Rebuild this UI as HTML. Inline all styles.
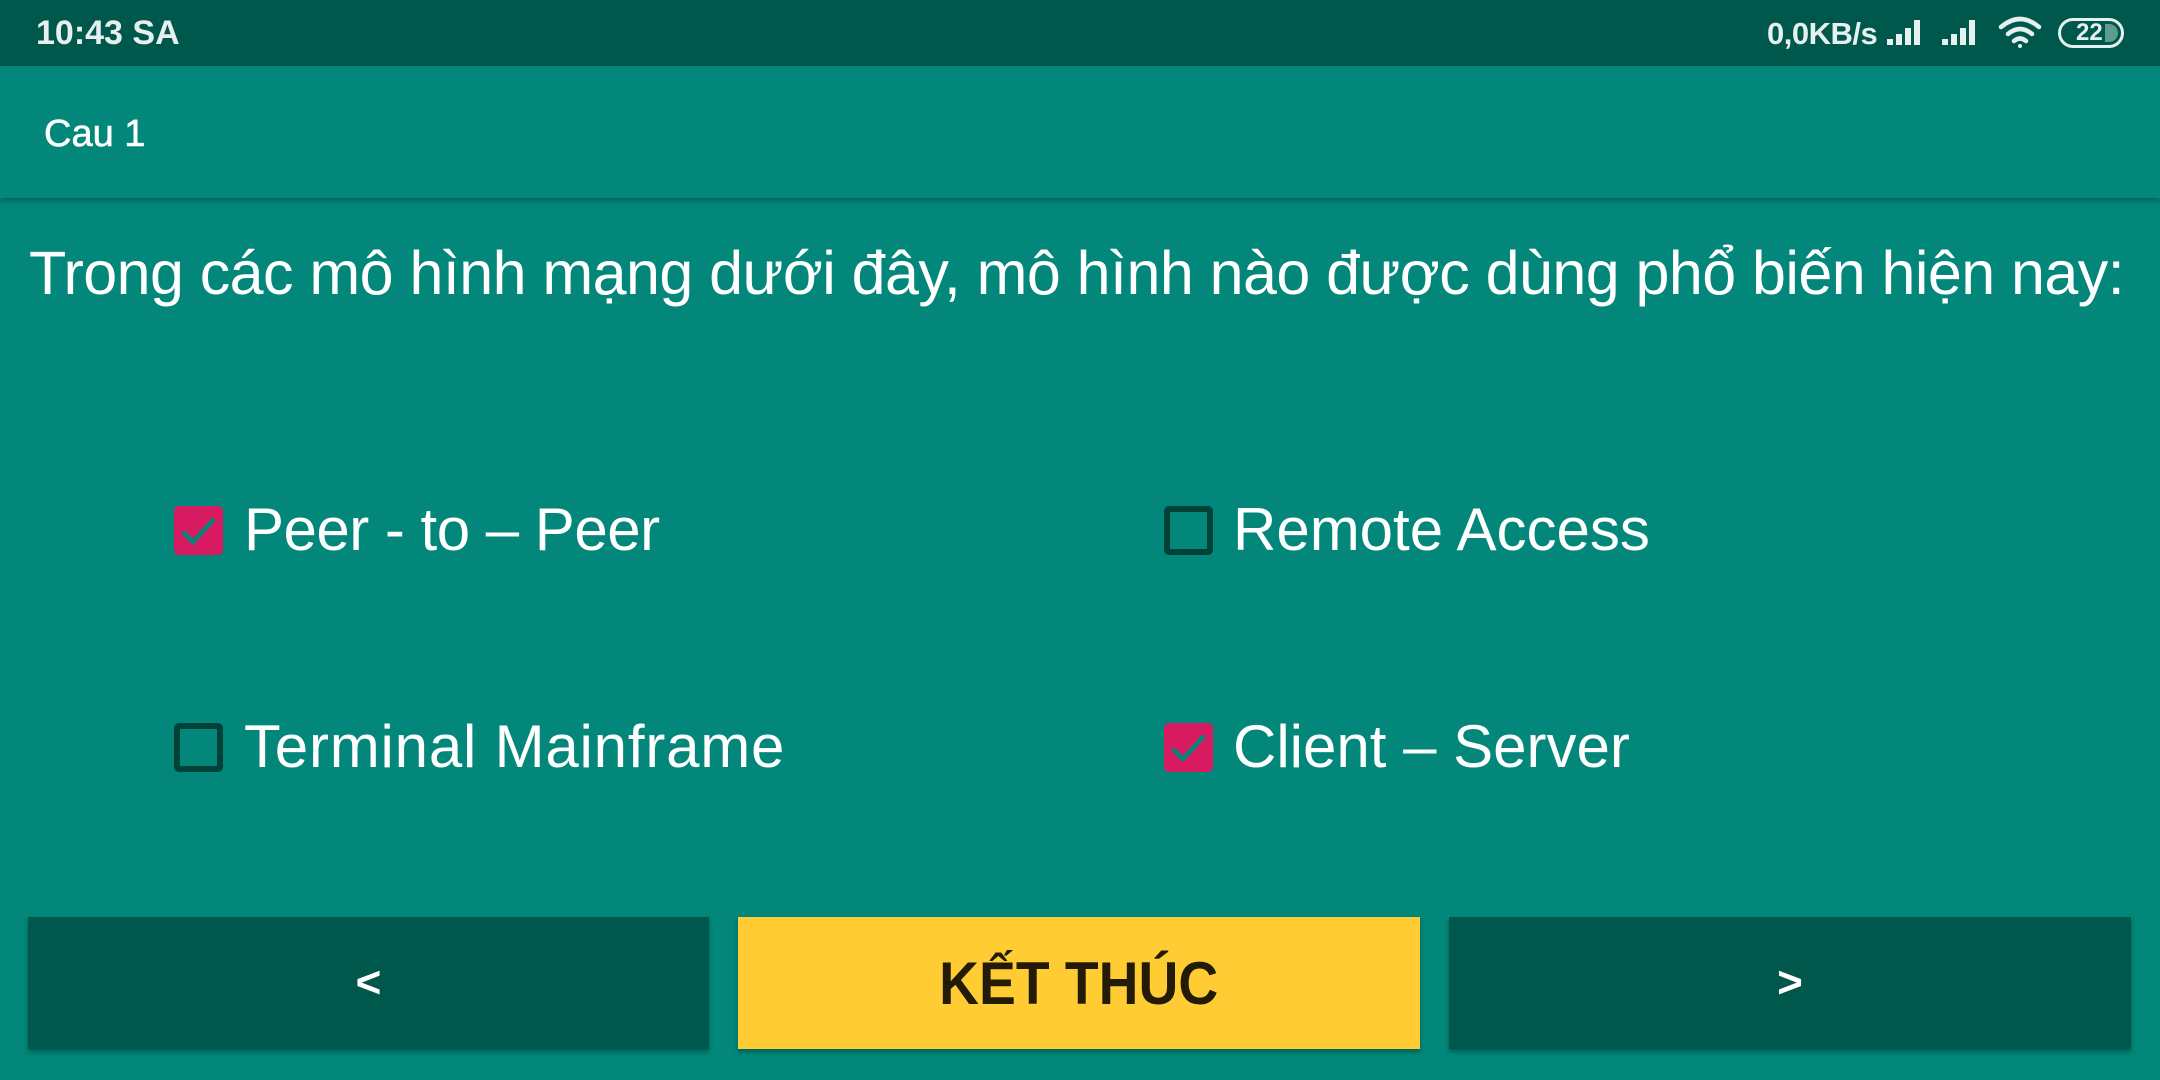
<!DOCTYPE html>
<html><head><meta charset="utf-8"><style>
*{margin:0;padding:0;box-sizing:border-box}
body{width:2160px;height:1080px;background:#02877A;font-family:"Liberation Sans",sans-serif;position:relative;overflow:hidden;color:#fff}
.sb{position:absolute;left:0;top:0;width:2160px;height:66px;background:#00584C}
.tb{position:absolute;left:0;top:66px;width:2160px;height:132px;background:#02877A;box-shadow:0 3px 5px rgba(0,0,0,.25)}
.abs{position:absolute;white-space:nowrap}
.cb{position:absolute;width:49px;height:49px;border-radius:5px}
.cb.on{background:#D81B60}
.cb.off{border:6px solid #004237}
.lbl{position:absolute;font-size:60px;line-height:60px}
.btn{position:absolute;top:917px;height:132px;box-shadow:0 3px 4px rgba(0,0,0,.3);display:flex;align-items:center;justify-content:center;font-weight:bold}
</style></head><body>
<div class="sb"></div>
<div class="abs" style="left:36px;top:14px;font-size:34px;font-weight:bold;color:#E6F0EE">10:43 SA</div>
<div class="abs" style="left:1767px;top:16px;font-size:31px;font-weight:bold;color:#E6F0EE;letter-spacing:-0.5px">0,0KB/s</div>
<svg class="abs" style="left:1885px;top:17px" width="100" height="30" viewBox="0 0 100 30">
<g fill="#E6F0EE"><rect x="2" y="22" width="6" height="6"/><rect x="11" y="17" width="6" height="11"/><rect x="20" y="11" width="6" height="17"/><rect x="29" y="3" width="6" height="25"/>
<rect x="57" y="22" width="6" height="6"/><rect x="66" y="17" width="6" height="11"/><rect x="75" y="11" width="6" height="17"/><rect x="84" y="3" width="6" height="25"/></g></svg>
<svg class="abs" style="left:1998px;top:16px" width="44" height="34" viewBox="0 0 44 34" fill="none" stroke="#E6F0EE" stroke-width="4.5" stroke-linecap="round">
<path d="M3 11 Q22 -5 41 11"/><path d="M10 18 Q22 8 34 18"/><path d="M16 25 Q22 20 28 25"/><circle cx="22" cy="30" r="2" fill="#E6F0EE" stroke="none"/></svg>
<div class="abs" style="left:2058px;top:18px;width:66px;height:30px;border:3px solid #E6F0EE;border-radius:15px"></div>
<div class="abs" style="left:2105px;top:24px;width:13px;height:18px;background:#5E9C90;border-radius:0 9px 9px 0"></div>
<div class="abs" style="left:2076px;top:17px;font-size:24px;font-weight:bold;color:#E6F0EE;line-height:32px">22</div>
<div class="tb"></div>
<div class="abs" style="left:44px;top:113px;font-size:38px;line-height:42px;-webkit-text-stroke:0.6px #fff">Cau 1</div>
<div class="abs" style="left:29px;top:238px;font-size:61px;line-height:70px;letter-spacing:-0.55px">Trong các mô hình mạng dưới đây, mô hình nào được dùng phổ biến hiện nay:</div>

<div class="cb on" style="left:174px;top:506px"><svg width="49" height="49" viewBox="0 0 49 49"><path d="M9 26 L19 36 L40 13" fill="none" stroke="#02877A" stroke-width="4.5"/></svg></div>
<div class="lbl" style="left:244px;top:500px;letter-spacing:-0.5px">Peer - to – Peer</div>
<div class="cb off" style="left:1164px;top:506px"></div>
<div class="lbl" style="left:1233px;top:500px">Remote Access</div>
<div class="cb off" style="left:174px;top:723px"></div>
<div class="lbl" style="left:244px;top:717px;letter-spacing:0.8px">Terminal Mainframe</div>
<div class="cb on" style="left:1164px;top:723px"><svg width="49" height="49" viewBox="0 0 49 49"><path d="M9 26 L19 36 L40 13" fill="none" stroke="#02877A" stroke-width="4.5"/></svg></div>
<div class="lbl" style="left:1233px;top:717px">Client – Server</div>

<div class="btn" style="left:28px;width:681px;background:#00584C;font-size:44px">&lt;</div>
<div class="btn" style="left:738px;width:682px;background:#FFCC33;color:#231B08;font-size:60px"><span style="display:inline-block;transform:scaleX(0.92)">KẾT THÚC</span></div>
<div class="btn" style="left:1449px;width:682px;background:#00584C;font-size:44px">&gt;</div>
</body></html>
